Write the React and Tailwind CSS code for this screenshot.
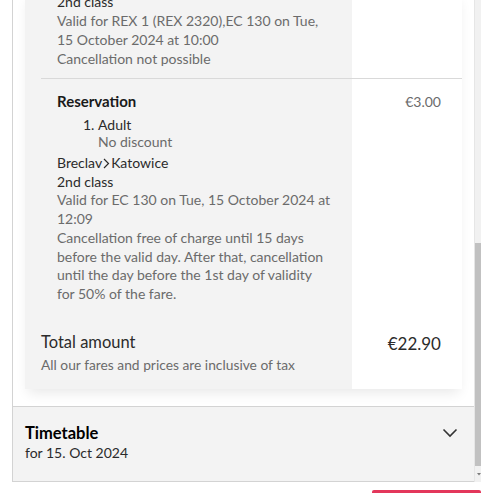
import React from 'react';

const gray = 'text-[#6b6b6b]';
const dark = 'text-[#2b2b2b]';

const Line = ({ children, className = '' }) => (
  <div className={`whitespace-nowrap ${className}`}>{children}</div>
);

const ChevronRight = () => (
  <svg width="7" height="11" viewBox="0 0 7 11" className="mx-[1px] inline-block align-[-1px]">
    <path d="M1 1l4.5 4.5L1 10" fill="none" stroke="#2b2b2b" strokeWidth="1.2" />
  </svg>
);

const Scrollbar = () => (
  <div className="flex w-[7px] flex-col border-l border-[#e6e6e6] bg-[#f1f1f1]">
    <div className="h-[243px]" />
    <div className="flex-1 bg-[#c1c1c1]" />
    <div className="flex h-[16px] items-center justify-end">
      <svg width="4" height="4" viewBox="0 0 4 4">
        <path d="M0 1h4L2 3.5z" fill="#7a7a7a" />
      </svg>
    </div>
  </div>
);

const Separator = () => (
  <div className="flex h-px">
    <div className="w-4 bg-[#f3f3f3]" />
    <div className="flex-1 bg-[#d9d9d9]" />
  </div>
);

export default function App() {
  return (
    <div className="h-[493px] w-[481px] overflow-hidden bg-white font-['Lato','Noto_Sans',sans-serif] text-[14px]">
      <div className="flex h-[482px] pl-[12px]">
        <div className="flex flex-1 flex-col border-b border-l border-[#d3d3d3]">
          <div className="-mt-[8px] px-[12px] pb-[17px]">
            <div className="flex flex-col bg-white shadow-[0_7px_12px_-3px_rgba(0,0,0,0.09)]">
              {/* previous ticket, cut off at top */}
              <div className="flex">
                <div className="w-[327px] bg-[#f3f3f3] pb-[10px] pl-[32px] pr-4 leading-[19px]">
                  <Line className={dark}>2nd class</Line>
                  <Line className={gray}>Valid for REX 1 (REX 2320),EC 130 on Tue,</Line>
                  <Line className={gray}>15 October 2024 at 10:00</Line>
                  <Line className={gray}>Cancellation not possible</Line>
                </div>
                <div className="flex-1" />
              </div>

              <Separator />

              {/* reservation */}
              <div className="flex">
                <div className="w-[327px] bg-[#f3f3f3] pb-[12px] pl-[32px] pr-4 pt-3">
                  <Line className="text-[15px] font-bold leading-[20px] text-[#1a1a1a]">Reservation</Line>
                  <div className="mt-[5px] flex pl-[26px] leading-[17px]">
                    <span className={`w-[15px] ${dark}`}>1.</span>
                    <div>
                      <Line className={dark}>Adult</Line>
                      <Line className={gray}>No discount</Line>
                    </div>
                  </div>
                  <div className="mt-[4px] leading-[18.7px]">
                    <Line className={dark}>
                      Breclav<ChevronRight />Katowice
                    </Line>
                    <Line className={dark}>2nd class</Line>
                    <Line className={gray}>Valid for EC 130 on Tue, 15 October 2024 at</Line>
                    <Line className={gray}>12:09</Line>
                    <Line className={gray}>Cancellation free of charge until 15 days</Line>
                    <Line className={gray}>before the valid day. After that, cancellation</Line>
                    <Line className={gray}>until the day before the 1st day of validity</Line>
                    <Line className={gray}>for 50% of the fare.</Line>
                  </div>
                </div>
                <div className={`flex-1 pr-[21px] pt-[13px] text-right leading-[19px] ${gray}`}>€3.00</div>
              </div>

              {/* total */}
              <div className="flex">
                <div className="w-[327px] bg-[#f3f3f3] pb-[15px] pl-4 pr-4 pt-4">
                  <Line className={`text-[16.5px] leading-[21px] ${dark}`}>Total amount</Line>
                  <Line className={`mt-[3px] text-[13.8px] leading-[18px] ${gray}`}>
                    All our fares and prices are inclusive of tax
                  </Line>
                </div>
                <div className={`flex-1 pr-[21px] pt-4 text-right text-[17px] leading-[24px] ${dark}`}>€22.90</div>
              </div>
            </div>
          </div>

          {/* timetable accordion */}
          <div className="flex flex-1 items-start justify-between border-t border-[#d3d3d3] bg-[#f3f3f3] pl-[12px] pr-[16px] pt-[17px]">
            <div>
              <div className="text-[16.5px] font-bold leading-[19px] text-black">Timetable</div>
              <div className={`leading-[19px] ${dark}`}>for 15. Oct 2024</div>
            </div>
            <svg width="16" height="10" viewBox="0 0 16 10" className="mt-[4px]">
              <path d="M1.5 1.5l6.5 6.5 6.5-6.5" fill="none" stroke="#333" strokeWidth="1.6" />
            </svg>
          </div>
        </div>
        <Scrollbar />
      </div>
      <div className="ml-[372px] mt-[8px] h-[4px] rounded-t-[2px] bg-[#e3375b]" />
    </div>
  );
}
